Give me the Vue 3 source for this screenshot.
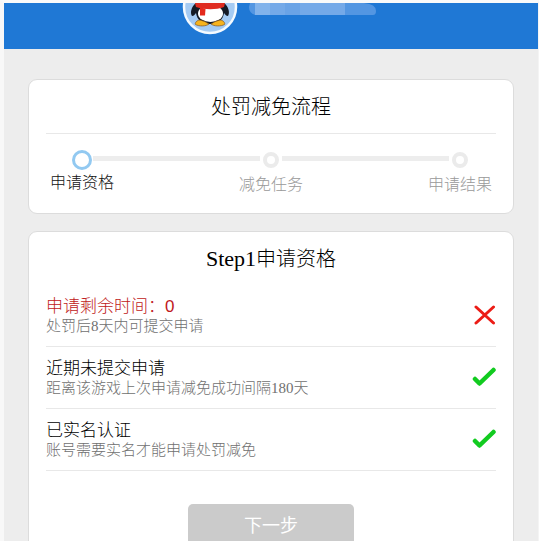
<script setup>
import { ref } from 'vue';

const pasos = ref([
    { nombre: '申请资格', activo: true },
    { nombre: '减免任务', activo: false },
    { nombre: '申请结果', activo: false }
]);

const requisitos = ref([
    { titulo: '申请剩余时间：0', detalle: '处罚后8天内可提交申请', ok: false },
    { titulo: '近期未提交申请', detalle: '距离该游戏上次申请减免成功间隔180天', ok: true },
    { titulo: '已实名认证', detalle: '账号需要实名才能申请处罚减免', ok: true }
]);
</script>

<template>
    <div class="page">
        <header class="header">
            <!-- AVATAR -->
            <svg class="avatar" viewBox="0 0 56 32" aria-hidden="true">
                <circle cx="28" cy="4" r="26" fill="#a5cbf3" stroke="#f4faff" stroke-width="2.5" />
                <path d="M14 0C9 4 8 10 10 13C12 13 13 11 14 10C15 17 20 21 28 21C36 21 41 17 42 10C43 11 44 13 46 13C48 10 47 4 42 0Z" fill="#151b26" />
                <ellipse cx="28.5" cy="10.5" rx="12.5" ry="8.5" fill="#fff" />
                <path d="M13 0H43L42 4C34 7 23 7 14 4Z" fill="#df2b20" />
                <path d="M18 4L23.500 6L23 12.500H18Z" fill="#e42a1d" />
                <path d="M18 17C15 17 12.500 20 13.500 21.500C17 23.500 24 23.500 27 21Q23 18 18 17ZM38 17C41 17 43.500 20 42.500 21.500C39 23.500 32 23.500 29 21Q33 18 38 17Z" fill="#f7b31c" stroke="#85551b" stroke-width=".7" />
            </svg>
            <!-- NOMBRE OCULTO -->
            <svg class="mask" viewBox="0 0 128 12" aria-hidden="true">
                <path d="M1 0H115Q127 1 127 8Q127 12 124 12H6Q0 10 0 4Z" fill="#5396e2" />
                <path d="M6 0H96V12H6Z" fill="#74a9e8" />
                <path d="M6 0H21V12H6Z" fill="#82b3eb" />
                <path d="M36 0H51V12H36Z" fill="#6aa3e6" />
            </svg>
        </header>

        <main class="content">
            <section class="card">
                <h2 class="card-title line">处罚减免流程</h2>
                <ol class="steps">
                    <template v-for="(paso, i) in pasos" :key="paso.nombre">
                        <li v-if="i > 0" class="bar" aria-hidden="true"></li>
                        <li class="step" :class="{ active: paso.activo }">
                            <span class="dot"></span>
                            <span class="label">{{ paso.nombre }}</span>
                        </li>
                    </template>
                </ol>
            </section>

            <section class="card">
                <h2 class="card-title"><span class="latin">Step1</span>申请资格</h2>
                <ul class="list">
                    <li v-for="item in requisitos" :key="item.titulo" class="item" :class="{ error: !item.ok }">
                        <div>
                            <p class="item-title">{{ item.titulo }}</p>
                            <p class="item-detail">{{ item.detalle }}</p>
                        </div>
                        <svg v-if="item.ok" class="icon" viewBox="0 0 24 20" aria-hidden="true">
                            <path d="M3 12L7.500 16.500L21.500 3" fill="none" stroke="#12cb20" stroke-width="4.500" stroke-linecap="round" stroke-linejoin="round" />
                        </svg>
                        <svg v-else class="icon" viewBox="0 0 24 20" aria-hidden="true">
                            <path d="M4 2L21.500 18M21.500 2L4 18" fill="none" stroke="#ec1c16" stroke-width="3" stroke-linecap="round" />
                        </svg>
                    </li>
                </ul>
                <button type="button" class="next">下一步</button>
            </section>
        </main>
    </div>
</template>

<style>
body {
    margin: 0;
    overflow: hidden;
}
</style>

<style scoped>
.page {
    height: 100vh;
    box-sizing: border-box;
    overflow: hidden;
    border-top: 3px solid #fafafa;
    border-left: 4px solid #f8f8f8;
    border-right: 1px solid #f4f4f4;
    background: #ededed;
    font-family: "Liberation Sans", "Noto Sans CJK SC", sans-serif;
    font-weight: 300;
}

/* CABECERA */
.header {
    display: flex;
    justify-content: center;
    align-items: flex-start;
    gap: 11px;
    height: 46px;
    padding-left: 17px;
    background: #1f78d5;
}

.avatar {
    width: 56px;
    height: 32px;
}

.mask {
    width: 128px;
    height: 12px;
}

.content {
    padding: 30px 24px 0;
}

.card {
    margin-bottom: 17px;
    padding: 0 17px;
    border: 1px solid #dcdcdc;
    border-radius: 9px;
    background: #fff;
}

.card-title {
    margin: 0;
    padding-top: 2px;
    font-size: 20px;
    font-weight: 300;
    line-height: 51px;
    text-align: center;
    color: #000;
}

.line {
    border-bottom: 1px solid #e8e8e8;
}

.latin {
    font-family: "Liberation Serif", serif;
    font-size: 22px;
    line-height: 20px;
}

/* PASOS */
.steps {
    display: flex;
    margin: 0;
    padding: 16px 0 15px;
    list-style: none;
}

.step {
    display: flex;
    flex-direction: column;
    align-items: center;
    width: 72px;
    color: #999;
}

.bar {
    flex: 1;
    height: 5px;
    margin: 6px -25px 0;
    background: #ededed;
}

.dot {
    box-sizing: border-box;
    width: 16px;
    height: 16px;
    margin: 2px 0 4px;
    border: 4px solid #ebebeb;
    border-radius: 50%;
}

.label {
    font-size: 16px;
    line-height: 26px;
}

.active {
    color: #111;
}

.active .dot {
    width: 20px;
    height: 20px;
    margin: 0;
    border: 3px solid #92c9f1;
}

/* REQUISITOS */
.list {
    margin: 0;
    padding: 0;
    list-style: none;
}

.item {
    display: flex;
    justify-content: space-between;
    align-items: center;
    height: 61px;
    border-bottom: 1px solid #e8e8e8;
}

.item p {
    margin: 0;
}

.item-title {
    font-size: 17px;
    line-height: 20px;
    color: #000;
}

.item-detail {
    font-family: "Liberation Serif", "Noto Sans CJK SC", sans-serif;
    font-size: 15px;
    line-height: 18px;
    color: #707070;
}

.error .item-title {
    color: #c01820;
}

.icon {
    width: 24px;
    height: 20px;
    margin-bottom: 2px;
}

/* BOTÓN */
.next {
    display: block;
    width: 37%;
    height: 44px;
    margin: 33px auto 20px;
    border: none;
    border-radius: 5px;
    background: #cbcbcb;
    color: #fff;
    font-family: inherit;
    font-size: 18px;
    line-height: 40px;
}
</style>
